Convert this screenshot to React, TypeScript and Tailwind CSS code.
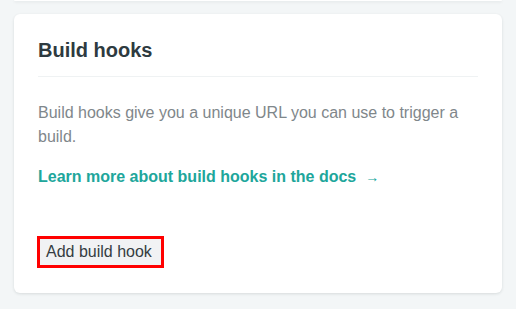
export default function App() {
  return (
    <div
      className="min-h-screen w-full bg-[#f3f6f7] px-[14px]"
      style={{ fontFamily: '"Liberation Sans", Arial, sans-serif' }}
    >
      {/* previous card, mostly scrolled out */}
      <div className="h-[1px] rounded-b-md bg-white shadow-[0_1px_3px_rgba(14,30,37,0.12)]" />

      <section className="mt-[13px] rounded-md bg-white px-6 pt-[22px] pb-[25px] shadow-[0_1px_3px_rgba(14,30,37,0.12)]">
        <h2 className="border-b border-[#eff2f3] pb-3 text-[20px] font-bold leading-[28px] text-[#2e3a40]">
          Build hooks
        </h2>
        <p className="mt-6 text-base leading-6 text-[#7f878b]">
          Build hooks give you a unique URL you can use to trigger a build.
        </p>
        <a href="#" className="mt-4 block text-base font-bold leading-6 text-[#20a69b]">
          Learn more about build hooks in the docs
          <span className="ml-[9px] text-sm font-normal">→</span>
        </a>
        <button className="mt-[47px] -ml-px block border-[3px] border-[#ff0000] bg-[#f1f2f4] pl-[6px] pr-[9px] text-base leading-[26px] text-[#353d42]">
          Add build hook
        </button>
      </section>
    </div>
  );
}
